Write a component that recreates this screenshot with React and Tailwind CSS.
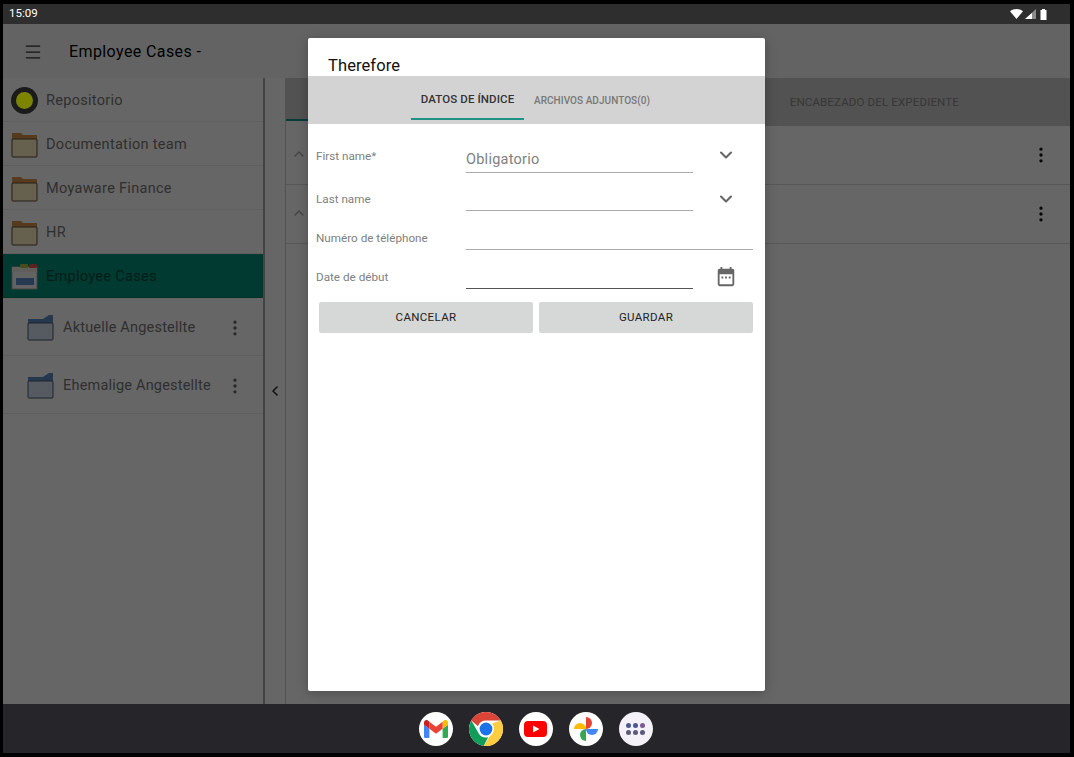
import React from 'react';
import { ChevronDown, ChevronLeft, ChevronUp, EllipsisVertical, Menu } from 'lucide-react';

const FolderIcon = ({ tone = 'tan' }) => {
  const top = tone === 'tan' ? '#d9954f' : '#5f8dc4';
  const body = tone === 'tan' ? '#fff0c4' : '#d8e4f4';
  const edge = tone === 'tan' ? '#5a4a30' : '#4a5a70';
  return (
    <svg width="27" height="27" viewBox="0 0 27 27" className="shrink-0">
      {tone === 'tan' ? (
        <path d="M1 2h9l2 2h14v6H1z" fill={top} />
      ) : (
        <path d="M1 5h15l6-4h4v9H1z" fill={top} />
      )}
      <rect x="1" y={tone === 'tan' ? 8 : 9} width="25" height={tone === 'tan' ? 18 : 17} rx="1" fill={body} stroke={edge} strokeWidth="1" />
    </svg>
  );
};

const CasesIcon = () => (
  <svg width="27" height="27" viewBox="0 0 27 27" className="shrink-0">
    <rect x="1" y="4" width="25" height="22" fill="#f8f8f8" stroke="#aaa" strokeWidth="1" />
    <rect x="1" y="4" width="25" height="5" fill="#f0ebe0" />
    <rect x="9" y="1" width="8" height="4" rx="1" fill="#b7b94a" />
    <rect x="18" y="1" width="8" height="4" rx="1" fill="#e2584f" />
    <rect x="5" y="15" width="18" height="7" fill="#5f8fd0" />
  </svg>
);

const SideRow = ({ icon, label, selected }) => (
  <div className={`flex h-11 items-center gap-2 border-b pl-2 pt-[2px] ${selected ? 'border-[#0a7a62] bg-[#00917a]' : 'border-[#eeeeee]'}`}>
    {icon}
    <span className={`text-[14.5px] tracking-[0.3px] ${selected ? 'text-[#0c4a3e]' : 'text-[#777777]'}`}>{label}</span>
  </div>
);

const SubRow = ({ label }) => (
  <div className="flex h-[58px] items-center border-b border-[#eeeeee] pl-6 pt-[2px]">
    <FolderIcon tone="blue" />
    <span className="ml-[9px] text-[14.5px] tracking-[0.2px] text-[#777777]">{label}</span>
    <EllipsisVertical size={20} className="ml-auto mr-[18px] text-[#666666]" />
  </div>
);

const FieldRow = ({ label, children, right, wide, dark, height = 'h-[39px]', labelPad = 'pb-[4px]' }) => (
  <div className={`flex ${height} items-end`}>
    <div className={`w-[150px] shrink-0 self-end ${labelPad} text-[11.7px] leading-[16px] text-[#808080]`}>{label}</div>
    <div className={`flex h-full shrink-0 ${wide ? 'w-[287px]' : 'w-[227px]'} items-end border-b ${dark ? 'border-[#555555]' : 'border-[#aaaaaa]'}`}>
      {children}
    </div>
    {right && <div className="flex w-[66px] shrink-0 justify-center self-end">{right}</div>}
  </div>
);

const Gmail = () => (
  <svg width="24" height="18" viewBox="0 0 24 18">
    <path d="M1.6 18h3.8V8.8L0 4.8v11.6C0 17.3.7 18 1.6 18z" fill="#4285f4" />
    <path d="M18.6 18h3.8c.9 0 1.6-.7 1.6-1.6V4.8l-5.4 4z" fill="#34a853" />
    <path d="M18.6 1.8v7l5.4-4V2.4C24 .4 21.7-.7 20.100.5z" fill="#fbbc04" />
    <path d="M5.400 8.800v-7L12 6.700l6.600-4.900v7L12 13.700z" fill="#ea4335" />
    <path d="M0 2.400v2.400l5.400 4v-7L3.900.5C2.300-.7 0 .4 0 2.400z" fill="#c5221f" />
  </svg>
);

const Chrome = () => (
  <svg width="34" height="34" viewBox="0 0 34 34">
    <circle cx="17" cy="17" r="17" fill="#ffffff" />
    <path d="M17 0a17 17 0 0 1 14.700 8.500H17a8.500 8.500 0 0 0-8 5.700L2.300 8.500A17 17 0 0 1 17 0z" fill="#db4437" />
    <path d="M2.300 8.500 9.600 21.200a8.500 8.500 0 0 0 9.500 4l-4.300 8.700A17 17 0 0 1 2.300 8.500z" fill="#0f9d58" />
    <path d="M31.700 8.500A17 17 0 0 1 15 33.900l7.300-12.700A8.500 8.500 0 0 0 23 11.500z" fill="#ffcd40" />
    <circle cx="17" cy="17" r="8" fill="#ffffff" />
    <circle cx="17" cy="17" r="6.400" fill="#1a73e8" />
  </svg>
);

const Youtube = () => (
  <svg width="23" height="16" viewBox="0 0 23 16">
    <rect width="23" height="16" rx="4" fill="#ff0000" />
    <path d="M9 4.500 15.500 8 9 11.500z" fill="#ffffff" />
  </svg>
);

const Photos = () => (
  <svg width="24" height="24" viewBox="0 0 24 24">
    <path d="M0 12a6 6 0 0 1 12 0z" fill="#fbbc04" />
    <path d="M12 0a6 6 0 0 1 0 12z" fill="#ea4335" />
    <path d="M24 12a6 6 0 0 1-12 0z" fill="#4285f4" />
    <path d="M12 24a6 6 0 0 1 0-12z" fill="#34a853" />
  </svg>
);

const DockIcon = ({ children, bg = 'bg-white' }) => (
  <div className={`flex h-[34px] w-[34px] items-center justify-center rounded-full ${bg}`}>{children}</div>
);

export default function App() {
  return (
    <div className="flex h-[757px] w-[1074px] flex-col overflow-hidden border-y-4 border-l-[3px] border-r-4 border-black bg-black font-['Roboto',sans-serif]">
      {/* status bar */}
      <div className="flex h-5 shrink-0 items-center justify-between bg-[#2e2e2e] pl-[6px] pr-[23px] text-white">
        <span className="text-[11.5px]">15:09</span>
        <div className="flex items-center gap-[2px]">
          <svg width="13" height="10" viewBox="0 0 13 10"><path d="M0 2.200C3.800-.7 9.200-.7 13 2.200L6.500 10z" fill="#fff" /></svg>
          <svg width="11" height="10" viewBox="0 0 11 10"><path d="M11 0v10H0z" fill="#fff" opacity=".45" /><path d="M7 4v6H0z" fill="#fff" /></svg>
          <svg width="7" height="11" viewBox="0 0 7 11" className="ml-[2px]"><path d="M2 0h3v1h1.500v10h-6V1H2z" fill="#fff" /></svg>
        </div>
      </div>

      {/* app area + dialog */}
      <div className="relative min-h-0 flex-1 bg-white">
        <div className="flex h-[54px] items-center bg-[#f8f8f8] pl-5 pt-[2px]">
          <Menu size={20} strokeWidth={1.5} className="-mt-[1px] text-[#333333]" />
          <span className="ml-[26px] text-[16px] tracking-[0.4px] text-[#000000]">Employee Cases -</span>
        </div>

        <div className="flex h-[626px]">
          <div className="w-[262px] shrink-0 border-r-2 border-[#aaaaaa]">
            <SideRow
              label="Repositorio"
              icon={
                <span className="flex h-[27px] w-[27px] shrink-0 items-center justify-center rounded-full bg-[#444444]">
                  <span className="relative z-10 h-[17px] w-[17px] rounded-full bg-[#7d8400]" />
                </span>
              }
            />
            <SideRow label="Documentation team" icon={<FolderIcon />} />
            <SideRow label="Moyaware Finance" icon={<FolderIcon />} />
            <SideRow label="HR" icon={<FolderIcon />} />
            <SideRow label="Employee Cases" icon={<CasesIcon />} selected />
            <SubRow label="Aktuelle Angestellte" />
            <SubRow label="Ehemalige Angestellte" />
          </div>

          <div className="flex w-[21px] shrink-0 items-start justify-center border-r border-[#cccccc] pt-[305px]">
            <ChevronLeft size={16} strokeWidth={2.5} className="text-[#333333]" />
          </div>

          <div className="min-w-0 flex-1">
            <div className="flex h-[48px] items-stretch bg-[#cdcdcd]">
              <div className="h-full w-[120px] bg-white">
                <div className="h-[43px] border-b-2 border-[#1d9384] bg-[#cdcdcd]" />
              </div>
              <span className="ml-auto mr-[111px] self-center pt-[2px] text-[11.5px] tracking-[0.15px] text-[#8a8a8a]">ENCABEZADO DEL EXPEDIENTE</span>
            </div>
            {[0, 1].map((i) => (
              <div key={i} className="flex h-[59px] items-center justify-between border-b border-[#dddddd] pl-[5px] pr-[19px]">
                <ChevronUp size={16} className="-mt-[2px] text-[#aaaaaa]" />
                <EllipsisVertical size={20} className="text-[#111111]" />
              </div>
            ))}
          </div>
        </div>

        <div className="absolute inset-0 bg-black/60" />

        {/* dialog */}
        <div className="absolute left-[305px] top-[14px] z-20 flex h-[653px] w-[457px] flex-col rounded-[2px] bg-white shadow-[0_2px_12px_rgba(0,0,0,0.25)]">
          <div className="h-[38px] shrink-0 pl-5 pt-[18px] text-[16.500px] leading-[20px] tracking-[0.1px] text-[#111111]">Therefore</div>
          <div className="flex h-[48px] shrink-0 justify-center bg-[#d3d3d3] pr-[12px]">
            <div className="flex h-[44px] w-[113px] items-center justify-center border-b-2 border-[#1d9384] pt-[6px] text-[11.5px] font-medium tracking-[0.1px] text-[#333333]">
              DATOS DE ÍNDICE
            </div>
            <div className="ml-[10px] flex h-[48px] items-center text-[10px] font-medium tracking-[0.05px] text-[#777777]">
              ARCHIVOS ADJUNTOS(0)
            </div>
          </div>

          <div className="flex flex-col pl-2 pr-3">
            <FieldRow
              label="First name*"
              height="h-[49px]"
              labelPad="pb-[9px]"
              right={<ChevronDown size={20} strokeWidth={2.5} className="mb-[8px] text-[#666666]" />}
            >
              <span className="pb-[1px] text-[14.5px] tracking-[0.25px] text-[#808080]">Obligatorio</span>
            </FieldRow>
            <FieldRow label="Last name" height="h-[38px]" right={<ChevronDown size={20} strokeWidth={2.5} className="mb-[2px] text-[#666666]" />} />
            <FieldRow label="Numéro de téléphone" wide />
            <FieldRow
              label="Date de début"
              dark
              right={
                <svg width="22" height="22" viewBox="0 0 24 24" className="mb-[1px]">
                  <path
                    d="M19 3h-1V1h-2v2H8V1H6v2H5a2 2 0 0 0-2 2v15a2 2 0 0 0 2 2h14a2 2 0 0 0 2-2V5a2 2 0 0 0-2-2zm0 17H5V9h14zM7 11.500h2v2H7zm4 0h2v2h-2zm4 0h2v2h-2z"
                    fill="#666666"
                  />
                </svg>
              }
            />
            <div className="mt-[13px] flex gap-[6px] pl-[3px]">
              <button className="h-[31px] w-[214px] rounded-[2px] bg-[#d6d7d7] text-[11.5px] tracking-[0.35px] text-[#222222]">CANCELAR</button>
              <button className="h-[31px] w-[214px] rounded-[2px] bg-[#d6d7d7] text-[11.5px] tracking-[0.35px] text-[#222222]">GUARDAR</button>
            </div>
          </div>
        </div>
      </div>

      {/* dock */}
      <div className="flex h-[49px] shrink-0 items-center justify-center gap-4 bg-[#25252a] pr-[2px]">
        <DockIcon><Gmail /></DockIcon>
        <DockIcon bg="bg-transparent"><Chrome /></DockIcon>
        <DockIcon><Youtube /></DockIcon>
        <DockIcon><Photos /></DockIcon>
        <DockIcon bg="bg-[#f4f1f8]">
          <div className="grid grid-cols-3 gap-[2px]">
            {['#4a5a90', '#4a5a90', '#7a5a90', '#5a5a7a', '#5a5a7a', '#5a5a7a'].map((c, i) => (
              <span key={i} className="h-[5px] w-[5px] rounded-full" style={{ backgroundColor: c }} />
            ))}
          </div>
        </DockIcon>
      </div>
    </div>
  );
}
